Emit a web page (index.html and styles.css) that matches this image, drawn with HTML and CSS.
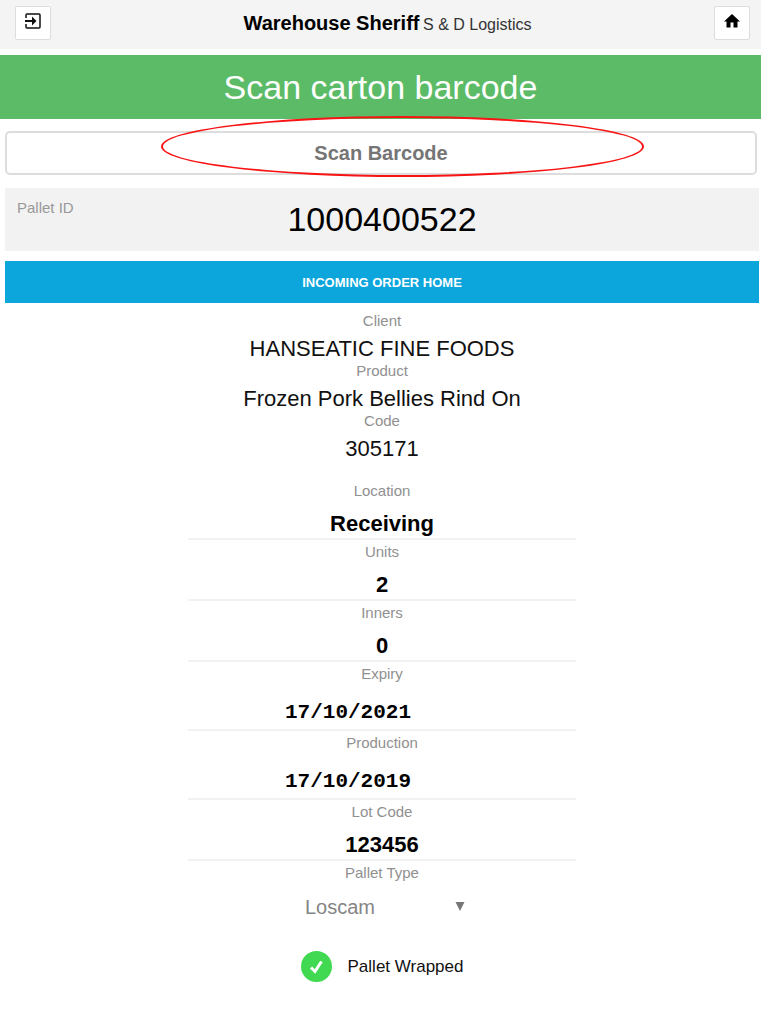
FILE: index.html
```html
<!DOCTYPE html>
<html lang="en">
<head>
  <meta charset="UTF-8">
  <meta name="viewport" content="width=device-width, initial-scale=1.0">
  <title>Warehouse Sheriff</title>
  <link rel="stylesheet" href="styles.css">
</head>
<body>
  <header class="topbar">
    <button type="button" class="icon-button" aria-label="Log out">
      <svg width="18" height="18" viewBox="0 0 18 18" fill="none" stroke="#111">
        <path stroke-width="1.500" d="M2 6V3q0-1 1-1h12q1 0 1 1v12q0 1-1 1H3q-1 0-1-1v-3" />
        <path stroke-width="2" d="M1 9h10" />
        <path fill="#111" stroke="none" d="M8 4.500L12.500 9L8 13.500z" />
      </svg>
    </button>
    <h1 class="title">Warehouse Sheriff <small>S &amp; D Logistics</small></h1>
    <button type="button" class="icon-button" aria-label="Home">
      <svg width="18" height="18" viewBox="0 0 18 18" fill="#000">
        <path d="M9 2L1 9.500h2.500V15.500H7.500v-5h3v5h4V9.500H17z" />
      </svg>
    </button>
  </header>

  <h2 class="banner">Scan carton barcode</h2>

  <main class="content">
    <div class="scan">
      <input type="text" class="scan-input" placeholder="Scan Barcode" aria-label="Scan Barcode">
      <div class="scan-ring"></div>
    </div>

    <div class="pallet">
      <span class="pallet-label">Pallet ID</span>
      <span class="pallet-id">1000400522</span>
    </div>

    <button type="button" class="order-home">INCOMING ORDER HOME</button>

    <dl class="info">
      <dt>Client</dt>
      <dd>HANSEATIC FINE FOODS</dd>
      <dt>Product</dt>
      <dd>Frozen Pork Bellies Rind On</dd>
      <dt>Code</dt>
      <dd>305171</dd>
    </dl>

    <form class="details">
      <div class="field">
        <label for="location">Location</label>
        <input type="text" id="location" value="Receiving">
      </div>
      <div class="field">
        <label for="units">Units</label>
        <input type="text" id="units" value="2">
      </div>
      <div class="field">
        <label for="inners">Inners</label>
        <input type="text" id="inners" value="0">
      </div>
      <div class="field">
        <label for="expiry">Expiry</label>
        <input type="text" class="date" id="expiry" value="17/10/2021">
      </div>
      <div class="field">
        <label for="production">Production</label>
        <input type="text" class="date" id="production" value="17/10/2019">
      </div>
      <div class="field">
        <label for="lot">Lot Code</label>
        <input type="text" id="lot" value="123456">
      </div>
      <div class="field">
        <label for="type">Pallet Type</label>
        <div class="select-wrap">
          <select id="type">
            <option>Loscam</option>
          </select>
          <svg width="10" height="9" viewBox="0 0 10 9" fill="#777"><path d="M0.500 0h9L5 9z" /></svg>
        </div>
      </div>
      <label class="wrapped">
        <span class="check">
          <input type="checkbox" checked>
          <svg width="31" height="31" viewBox="0 0 31 31" fill="none" stroke="#fff" stroke-width="3"><path d="M10 16.500L14 20.500L20.500 10.500" /></svg>
        </span>
        <span>Pallet Wrapped</span>
      </label>
    </form>
  </main>
</body>
</html>
```

FILE: styles.css
```css
* {
  box-sizing: border-box;
}

body {
  margin: 0;
  font-family: "Liberation Sans", Arial, sans-serif;
  background-color: #fff;
  color: #111;
}

input,
select,
button {
  font-family: inherit;
  margin: 0;
}

.topbar {
  display: flex;
  justify-content: space-between;
  align-items: center;
  padding: 6px 11px 9px 15px;
  background-color: #f4f4f4;
}

.icon-button {
  display: flex;
  justify-content: center;
  width: 36px;
  height: 34px;
  padding: 5px 0;
  background-color: #fff;
  border: 1px solid #ddd;
  border-radius: 2px;
}

.title {
  margin: 0;
  padding-left: 10px;
  font-size: 20px;
  line-height: 34px;
  color: #000;
}

.title small {
  margin-left: -2px;
  font-size: 16px;
  font-weight: normal;
  line-height: 1;
  color: #333;
}

.banner {
  margin: 6px 0 0;
  font-size: 34px;
  font-weight: normal;
  line-height: 64px;
  text-align: center;
  color: #fff;
  background-color: #5bbb66;
}

.content {
  padding: 12px 2px 0 5px;
}

.scan {
  position: relative;
  margin-right: 2px;
}

.scan-input {
  display: block;
  width: 100%;
  height: 44px;
  border: 2px solid #ddd;
  border-radius: 5px;
  font-size: 20px;
  font-weight: bold;
  text-align: center;
}

.scan-input::placeholder {
  color: #757575;
}

/* highlight drawn over the scan box */
.scan-ring {
  position: absolute;
  top: -15px;
  left: 156px;
  right: 113px;
  height: 61px;
  border: 2px solid #f81414;
  border-radius: 50%;
  pointer-events: none;
}

.pallet {
  display: grid;
  grid-template-columns: 1fr auto 1fr;
  margin-top: 13px;
  padding: 0 12px;
  background-color: #f2f2f2;
}

.pallet-label {
  padding-top: 10px;
  font-size: 15px;
  line-height: 20px;
  color: #999;
}

.pallet-id {
  font-size: 34px;
  line-height: 63px;
  color: #000;
}

.order-home {
  display: block;
  width: 100%;
  height: 42px;
  margin-top: 10px;
  border: none;
  background-color: #0ca6dc;
  color: #fff;
  font-size: 13px;
  font-weight: bold;
}

.info {
  margin: 8px 0 18px;
  text-align: center;
}

.info dt,
.field label {
  display: block;
  font-size: 15px;
  line-height: 20px;
  color: #909090;
}

.info dd {
  margin: 0;
  padding-top: 6px;
  font-size: 22px;
  line-height: 24px;
}

.details {
  max-width: 388px;
  margin: 0 auto;
  text-align: center;
}

.field {
  padding-top: 2px;
}

.field > input {
  display: block;
  width: 100%;
  height: 39px;
  padding: 11px 0 3px;
  border: none;
  border-bottom: 2px solid #f2f2f2;
  background: none;
  color: #000;
  font-size: 22px;
  font-weight: bold;
  text-align: center;
}

.field > .date {
  height: 47px;
  padding: 15px 0 3px 25%;
  font-family: "Liberation Mono", "Courier New", monospace;
  font-size: 21px;
  text-align: left;
}

.select-wrap {
  position: relative;
  width: 154px;
  margin: 6px auto 0;
}

.select-wrap select {
  display: block;
  width: 100%;
  height: 36px;
  padding: 0;
  border: none;
  appearance: none;
  background: none;
  color: #858585;
  font-size: 20px;
}

.select-wrap svg {
  position: absolute;
  top: 13px;
  right: -6px;
  pointer-events: none;
}

.wrapped {
  display: flex;
  justify-content: center;
  align-items: center;
  gap: 16px;
  margin-top: 26px;
  font-size: 17px;
}

.check {
  display: grid;
}

.check input,
.check svg {
  grid-area: 1 / 1;
}

.check input {
  width: 31px;
  height: 31px;
  appearance: none;
  border-radius: 50%;
}

.check input:checked {
  background-color: #41d951;
}

.check svg {
  z-index: 1;
  pointer-events: none;
}
```
